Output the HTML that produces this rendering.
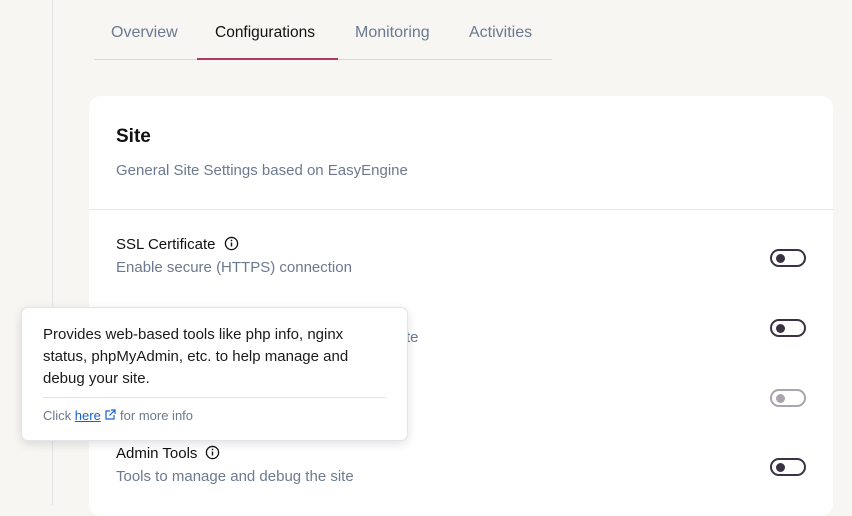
<!DOCTYPE html>
<html><head><style>
*{margin:0;padding:0;box-sizing:border-box}
body{width:852px;height:505px;background:#f7f6f2;font-family:"Liberation Sans",sans-serif;position:relative;overflow:hidden}
.a{position:absolute;white-space:nowrap}
.tab{font-size:16px;color:#6b7a90;top:24px}
.card{position:absolute;left:89px;top:96px;width:744px;height:420px;background:#fff;border-radius:12px}
.t{font-size:15px;color:#111}
.d{font-size:15px;color:#6b7a90}
.tg{position:absolute;left:770px;width:36px;height:18px;border:2.5px solid #3a3142;border-radius:9px}
.tg:after{content:"";position:absolute;left:4px;top:2.5px;width:9px;height:9px;border-radius:50%;background:#3a3142}
.tg.dis{border-color:#a9a4ad}.tg.dis:after{background:#a9a4ad}
.i{display:inline-block;vertical-align:-2px;margin-left:8px}
</style></head><body>
<div class="a" style="left:52px;top:0;width:1px;height:505px;background:#e3e3e6"></div>
<div class="a tab" style="left:111px">Overview</div>
<div class="a tab" style="left:215px;color:#111;font-size:15.5px">Configurations</div>
<div class="a tab" style="left:355px">Monitoring</div>
<div class="a tab" style="left:469px">Activities</div>
<div class="a" style="left:94px;top:59px;width:458px;height:1px;background:#d8d8da"></div>
<div class="a" style="left:197px;top:58px;width:141px;height:2px;background:#b03a67"></div>
<div class="card"></div>
<div class="a" style="left:116px;top:126px;font-size:19px;color:#111;font-weight:bold">Site</div>
<div class="a d" style="left:116px;top:162px">General Site Settings based on EasyEngine</div>
<div class="a" style="left:89px;top:209px;width:744px;height:1px;background:#e6e6ea"></div>
<div class="a t" style="left:116px;top:236px">SSL Certificate<svg class="i" width="15" height="15" viewBox="0 0 16 16"><circle cx="8" cy="8" r="6.5" fill="none" stroke="#111" stroke-width="1.4"/><path d="M8 7v4.2" stroke="#111" stroke-width="1.5"/><circle cx="8" cy="4.8" r=".9" fill="#111"/></svg></div>
<div class="a d" style="left:116px;top:259px">Enable secure (HTTPS) connection</div>
<div class="a d" style="left:406px;top:329px">te</div>
<div class="a t" style="left:116px;top:445px">Admin Tools<svg class="i" width="15" height="15" viewBox="0 0 16 16"><circle cx="8" cy="8" r="6.5" fill="none" stroke="#111" stroke-width="1.4"/><path d="M8 7v4.2" stroke="#111" stroke-width="1.5"/><circle cx="8" cy="4.8" r=".9" fill="#111"/></svg></div>
<div class="a d" style="left:116px;top:468px">Tools to manage and debug the site</div>
<div class="tg" style="top:249px"></div>
<div class="tg" style="top:319px"></div>
<div class="tg dis" style="top:389px"></div>
<div class="tg" style="top:458px"></div>
<div class="a" style="left:21px;top:307px;width:387px;height:134px;background:#fff;border:1px solid #e2e4ea;border-radius:7px;box-shadow:0 3px 10px rgba(0,0,0,.12)"></div>
<div class="a" style="left:43px;top:324px;font-size:15px;color:#1a1a1a;line-height:22px">Provides web-based tools like php info, nginx<br>status, phpMyAdmin, etc. to help manage and<br>debug your site.</div>
<div class="a" style="left:43px;top:397px;width:343px;height:1px;background:#e3e3e6"></div>
<div class="a" style="left:43px;top:408px;font-size:13px;color:#6b7a90">Click <span style="color:#1a5fd6;text-decoration:underline">here</span> <svg width="12" height="12" viewBox="0 0 12 12" style="vertical-align:-1px"><path d="M6 2H2v8h8V6M7 1h4v4M11 1 5.5 6.5" fill="none" stroke="#1a5fd6" stroke-width="1.2"/></svg> for more info</div>
</body></html>
